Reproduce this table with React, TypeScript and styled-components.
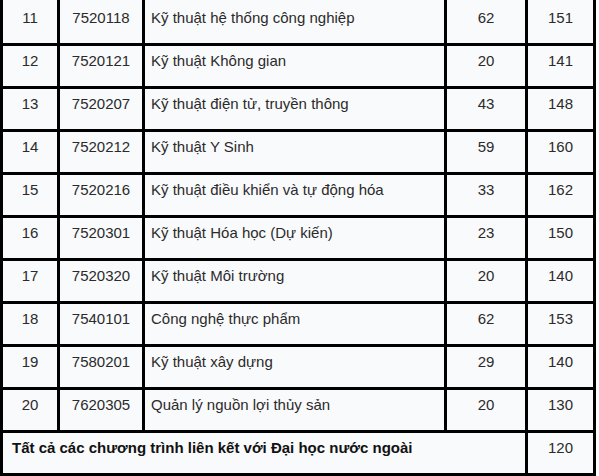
import React from "react";
import styled, { createGlobalStyle } from "styled-components";

const Global = createGlobalStyle`
  html, body { margin: 0; padding: 0; background: #ffffff; }
  body { font-family: "Liberation Sans", Arial, sans-serif; }
`;

const Table = styled.table`
  border-collapse: separate;
  border-spacing: 0;
  table-layout: fixed;
  width: 596px;
  background: #f9fafc;
  font-family: "Liberation Sans", Arial, sans-serif;
  font-size: 15px;
  color: #2b2b2b;
`;

const Row = styled.tr<{ $first?: boolean }>`
  height: ${(p) => (p.$first ? 46 : 43)}px;
`;

const Cell = styled.td<{ $align?: "left" | "center"; $first?: boolean; $lead?: boolean }>`
  box-sizing: border-box;
  border-right: 3px solid #000;
  border-bottom: 3px solid #000;
  border-left: ${(p) => (p.$lead ? "3px solid #000" : "none")};
  padding: ${(p) => (p.$first ? 9 : 6)}px 6px 0;
  vertical-align: top;
  text-align: ${(p) => p.$align ?? "center"};
  white-space: nowrap;
`;

const FooterCell = styled(Cell)`
  font-weight: bold;
  color: #111111;
  padding-left: 9px;
`;

const rows: [string, string, string, string, string][] = [
  ["11", "7520118", "Kỹ thuật hệ thống công nghiệp", "62", "151"],
  ["12", "7520121", "Kỹ thuật Không gian", "20", "141"],
  ["13", "7520207", "Kỹ thuật điện tử, truyền thông", "43", "148"],
  ["14", "7520212", "Kỹ thuật Y Sinh", "59", "160"],
  ["15", "7520216", "Kỹ thuật điều khiển và tự động hóa", "33", "162"],
  ["16", "7520301", "Kỹ thuật Hóa học (Dự kiến)", "23", "150"],
  ["17", "7520320", "Kỹ thuật Môi trường", "20", "140"],
  ["18", "7540101", "Công nghệ thực phẩm", "62", "153"],
  ["19", "7580201", "Kỹ thuật xây dựng", "29", "140"],
  ["20", "7620305", "Quản lý nguồn lợi thủy sản", "20", "130"],
];

export default function App() {
  return (
    <>
      <Global />
      <Table>
        <colgroup>
          <col style={{ width: 60 }} />
          <col style={{ width: 85 }} />
          <col style={{ width: 302 }} />
          <col style={{ width: 81 }} />
          <col style={{ width: 68 }} />
        </colgroup>
        <tbody>
          {rows.map((r, i) => (
            <Row key={r[0]} $first={i === 0}>
              <Cell $lead $first={i === 0}>{r[0]}</Cell>
              <Cell $first={i === 0}>{r[1]}</Cell>
              <Cell $first={i === 0} $align="left">{r[2]}</Cell>
              <Cell $first={i === 0}>{r[3]}</Cell>
              <Cell $first={i === 0}>{r[4]}</Cell>
            </Row>
          ))}
          <Row>
            <FooterCell $lead colSpan={4} $align="left">
              Tất cả các chương trình liên kết với Đại học nước ngoài
            </FooterCell>
            <Cell>120</Cell>
          </Row>
        </tbody>
      </Table>
    </>
  );
}
